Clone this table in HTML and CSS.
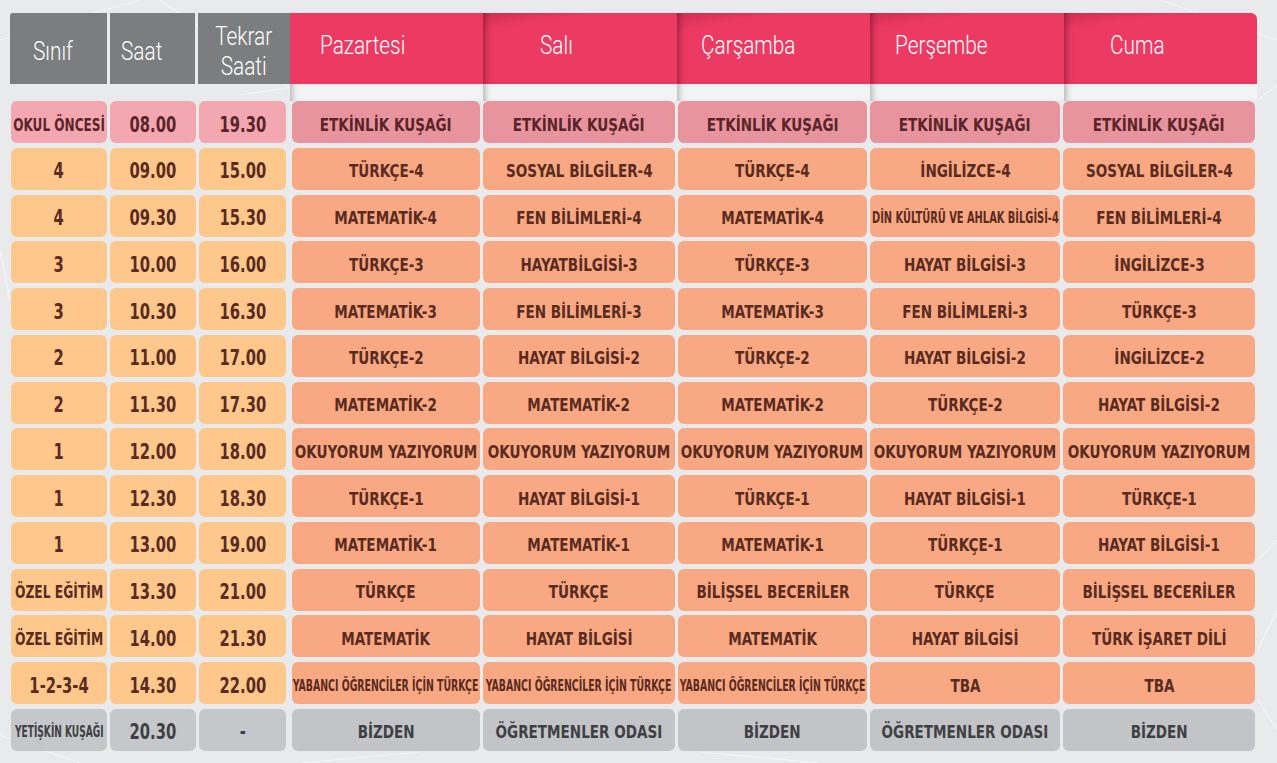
FILE: index.html
```html
<!DOCTYPE html>
<html lang="tr">
<head>
<meta charset="utf-8">
<title>Yayın Akışı</title>
<link rel="stylesheet" href="styles.css">
</head>
<body>
<div class="schedule">
  <div class="head">
    <div class="hgray">
      <div class="hcell hc-sinif"><span class="lbl">Sınıf</span></div>
      <div class="hcell hc-saat"><span class="lbl">Saat</span></div>
      <div class="hcell hc-tekrar"><span class="lbl lbl-c">Tekrar<br>Saati</span></div>
    </div>
    <div class="hdays">
      <div class="hday hd-pzt"><span class="lbl">Pazartesi</span></div>
      <div class="hday hd-sal"><span class="lbl">Salı</span></div>
      <div class="hday hd-car"><span class="lbl">Çarşamba</span></div>
      <div class="hday hd-per"><span class="lbl">Perşembe</span></div>
      <div class="hday hd-cum"><span class="lbl">Cuma</span></div>
    </div>
  </div>
  <div class="strip">
    <div class="strip-cell"></div><div class="strip-cell"></div><div class="strip-cell"></div><div class="strip-cell"></div><div class="strip-cell"></div>
  </div>
  <div class="rows">
    <div class="row pink">
      <div class="c l"><span class="sq-okul">OKUL ÖNCESİ</span></div>
      <div class="c l n"><span>08.00</span></div>
      <div class="c l n"><span>19.30</span></div>
      <div class="c"><span>ETKİNLİK KUŞAĞI</span></div>
      <div class="c"><span>ETKİNLİK KUŞAĞI</span></div>
      <div class="c"><span>ETKİNLİK KUŞAĞI</span></div>
      <div class="c"><span>ETKİNLİK KUŞAĞI</span></div>
      <div class="c"><span>ETKİNLİK KUŞAĞI</span></div>
    </div>
    <div class="row orange">
      <div class="c l n"><span>4</span></div>
      <div class="c l n"><span>09.00</span></div>
      <div class="c l n"><span>15.00</span></div>
      <div class="c"><span>TÜRKÇE-4</span></div>
      <div class="c"><span>SOSYAL BİLGİLER-4</span></div>
      <div class="c"><span>TÜRKÇE-4</span></div>
      <div class="c"><span>İNGİLİZCE-4</span></div>
      <div class="c"><span>SOSYAL BİLGİLER-4</span></div>
    </div>
    <div class="row orange">
      <div class="c l n"><span>4</span></div>
      <div class="c l n"><span>09.30</span></div>
      <div class="c l n"><span>15.30</span></div>
      <div class="c"><span>MATEMATİK-4</span></div>
      <div class="c"><span>FEN BİLİMLERİ-4</span></div>
      <div class="c"><span>MATEMATİK-4</span></div>
      <div class="c"><span class="sq-din">DİN KÜLTÜRÜ VE AHLAK BİLGİSİ-4</span></div>
      <div class="c"><span>FEN BİLİMLERİ-4</span></div>
    </div>
    <div class="row orange">
      <div class="c l n"><span>3</span></div>
      <div class="c l n"><span>10.00</span></div>
      <div class="c l n"><span>16.00</span></div>
      <div class="c"><span>TÜRKÇE-3</span></div>
      <div class="c"><span>HAYATBİLGİSİ-3</span></div>
      <div class="c"><span>TÜRKÇE-3</span></div>
      <div class="c"><span>HAYAT BİLGİSİ-3</span></div>
      <div class="c"><span>İNGİLİZCE-3</span></div>
    </div>
    <div class="row orange">
      <div class="c l n"><span>3</span></div>
      <div class="c l n"><span>10.30</span></div>
      <div class="c l n"><span>16.30</span></div>
      <div class="c"><span>MATEMATİK-3</span></div>
      <div class="c"><span>FEN BİLİMLERİ-3</span></div>
      <div class="c"><span>MATEMATİK-3</span></div>
      <div class="c"><span>FEN BİLİMLERİ-3</span></div>
      <div class="c"><span>TÜRKÇE-3</span></div>
    </div>
    <div class="row orange">
      <div class="c l n"><span>2</span></div>
      <div class="c l n"><span>11.00</span></div>
      <div class="c l n"><span>17.00</span></div>
      <div class="c"><span>TÜRKÇE-2</span></div>
      <div class="c"><span>HAYAT BİLGİSİ-2</span></div>
      <div class="c"><span>TÜRKÇE-2</span></div>
      <div class="c"><span>HAYAT BİLGİSİ-2</span></div>
      <div class="c"><span>İNGİLİZCE-2</span></div>
    </div>
    <div class="row orange">
      <div class="c l n"><span>2</span></div>
      <div class="c l n"><span>11.30</span></div>
      <div class="c l n"><span>17.30</span></div>
      <div class="c"><span>MATEMATİK-2</span></div>
      <div class="c"><span>MATEMATİK-2</span></div>
      <div class="c"><span>MATEMATİK-2</span></div>
      <div class="c"><span>TÜRKÇE-2</span></div>
      <div class="c"><span>HAYAT BİLGİSİ-2</span></div>
    </div>
    <div class="row orange">
      <div class="c l n"><span>1</span></div>
      <div class="c l n"><span>12.00</span></div>
      <div class="c l n"><span>18.00</span></div>
      <div class="c"><span>OKUYORUM YAZIYORUM</span></div>
      <div class="c"><span>OKUYORUM YAZIYORUM</span></div>
      <div class="c"><span>OKUYORUM YAZIYORUM</span></div>
      <div class="c"><span>OKUYORUM YAZIYORUM</span></div>
      <div class="c"><span>OKUYORUM YAZIYORUM</span></div>
    </div>
    <div class="row orange">
      <div class="c l n"><span>1</span></div>
      <div class="c l n"><span>12.30</span></div>
      <div class="c l n"><span>18.30</span></div>
      <div class="c"><span>TÜRKÇE-1</span></div>
      <div class="c"><span>HAYAT BİLGİSİ-1</span></div>
      <div class="c"><span>TÜRKÇE-1</span></div>
      <div class="c"><span>HAYAT BİLGİSİ-1</span></div>
      <div class="c"><span>TÜRKÇE-1</span></div>
    </div>
    <div class="row orange">
      <div class="c l n"><span>1</span></div>
      <div class="c l n"><span>13.00</span></div>
      <div class="c l n"><span>19.00</span></div>
      <div class="c"><span>MATEMATİK-1</span></div>
      <div class="c"><span>MATEMATİK-1</span></div>
      <div class="c"><span>MATEMATİK-1</span></div>
      <div class="c"><span>TÜRKÇE-1</span></div>
      <div class="c"><span>HAYAT BİLGİSİ-1</span></div>
    </div>
    <div class="row orange">
      <div class="c l"><span class="sq-ozel">ÖZEL EĞİTİM</span></div>
      <div class="c l n"><span>13.30</span></div>
      <div class="c l n"><span>21.00</span></div>
      <div class="c"><span>TÜRKÇE</span></div>
      <div class="c"><span>TÜRKÇE</span></div>
      <div class="c"><span>BİLİŞSEL BECERİLER</span></div>
      <div class="c"><span>TÜRKÇE</span></div>
      <div class="c"><span>BİLİŞSEL BECERİLER</span></div>
    </div>
    <div class="row orange">
      <div class="c l"><span class="sq-ozel">ÖZEL EĞİTİM</span></div>
      <div class="c l n"><span>14.00</span></div>
      <div class="c l n"><span>21.30</span></div>
      <div class="c"><span>MATEMATİK</span></div>
      <div class="c"><span>HAYAT BİLGİSİ</span></div>
      <div class="c"><span>MATEMATİK</span></div>
      <div class="c"><span>HAYAT BİLGİSİ</span></div>
      <div class="c"><span>TÜRK İŞARET DİLİ</span></div>
    </div>
    <div class="row orange">
      <div class="c l n"><span>1-2-3-4</span></div>
      <div class="c l n"><span>14.30</span></div>
      <div class="c l n"><span>22.00</span></div>
      <div class="c"><span class="sq-yab">YABANCI ÖĞRENCİLER İÇİN TÜRKÇE</span></div>
      <div class="c"><span class="sq-yab">YABANCI ÖĞRENCİLER İÇİN TÜRKÇE</span></div>
      <div class="c"><span class="sq-yab">YABANCI ÖĞRENCİLER İÇİN TÜRKÇE</span></div>
      <div class="c"><span>TBA</span></div>
      <div class="c"><span>TBA</span></div>
    </div>
    <div class="row gray">
      <div class="c l"><span class="sq-yet">YETİŞKİN KUŞAĞI</span></div>
      <div class="c l n"><span>20.30</span></div>
      <div class="c l n"><span>-</span></div>
      <div class="c"><span>BİZDEN</span></div>
      <div class="c"><span>ÖĞRETMENLER ODASI</span></div>
      <div class="c"><span>BİZDEN</span></div>
      <div class="c"><span>ÖĞRETMENLER ODASI</span></div>
      <div class="c"><span>BİZDEN</span></div>
    </div>
  </div>
</div>
</body>
</html>
```
FILE: styles.css
```css
* { box-sizing: border-box; margin: 0; padding: 0; }

html, body { width: 1277px; height: 763px; overflow: hidden; }

body {
  background-color: #e8eaeb;
  background-image: url("data:image/svg+xml,%3Csvg xmlns='http://www.w3.org/2000/svg' width='1277' height='763'%3E%3Cg stroke='%23ffffff' stroke-opacity='0.55' stroke-width='1.2' fill='none'%3E%3Cpath d='M0 40 L140 0'/%3E%3Cpath d='M160 0 L300 95'/%3E%3Cpath d='M240 95 L340 80 L420 100'/%3E%3Cpath d='M1160 0 L1277 40'/%3E%3Cpath d='M1258 100 L1277 85'/%3E%3Cpath d='M1258 560 L1277 540'/%3E%3Cpath d='M1258 650 L1277 610'/%3E%3Cpath d='M1258 700 L1277 730'/%3E%3Cpath d='M0 735 L80 763'/%3E%3Cpath d='M0 250 L10 300'/%3E%3Cpath d='M300 763 L420 752'/%3E%3Cpath d='M700 752 L820 763'/%3E%3C/g%3E%3C/svg%3E");
  font-family: "DejaVu Sans Condensed", "DejaVu Sans", sans-serif;
}

.schedule { padding: 13px 0 0 10px; width: 1277px; }

/* ---------- header ---------- */
.head { display: flex; height: 71px; width: 1247px; }

.hgray { display: flex; gap: 3px; flex: none; }

.hcell, .hday {
  color: #ffffff;
  font-family: Roboto, "Liberation Sans", sans-serif;
  font-weight: 300;
  font-size: 26px;
  line-height: 26px;
  display: flex;
  align-items: flex-start;
}

.hcell { background: #7b7d7f; padding-top: 25px; }
.hc-sinif { width: 97px; padding-left: 23px; border-top-left-radius: 3px; }
.hc-saat { width: 85px; padding-left: 11px; }
.hc-tekrar { width: 92px; justify-content: center; padding-top: 8px; line-height: 30px; text-align: center; }

.lbl { display: inline-block; transform: scaleX(0.8); transform-origin: left center; white-space: nowrap; }
.lbl-c { transform-origin: center center; }

.hdays { display: flex; width: 967px; flex: none; }

.hday {
  flex: none;
  width: 20%;
  background: #ec3a63;
  background-image: linear-gradient(170deg, rgba(120, 10, 40, 0.22) 0%, rgba(120, 10, 40, 0) 18%);
  padding-top: 19px;
  box-shadow: inset 7px 0 7px -5px rgba(60, 0, 15, 0.45);
}
.hd-pzt { padding-left: 30px; background-image: none; box-shadow: none; }
.hd-sal { padding-left: 57px; }
.hd-car { padding-left: 24px; }
.hd-per { padding-left: 25px; }
.hd-cum { padding-left: 46px; border-top-right-radius: 6px; }

/* strip under the day headers */
.strip { display: flex; height: 17px; width: 1247px; padding-left: 280px; }
.strip-cell {
  flex: none;
  width: 20%;
  background: #f2f3f4;
  box-shadow: inset 6px 0 6px -4px rgba(0, 0, 0, 0.28);
}

/* ---------- rows ---------- */
.rows { display: flex; flex-direction: column; gap: 4.77px; margin-left: 1px; width: 1247px; }

.row {
  display: grid;
  grid-template-columns: 96px 86px 87px 191px 192px 189px 190px 192px;
  column-gap: 3px;
  height: 42px;
}
.row > .c:nth-child(4) { margin-left: 3px; }

.c {
  border-radius: 6px;
  display: flex;
  align-items: center;
  justify-content: center;
  padding-top: 5px;
  color: #5a2b1f;
  font-weight: bold;
  font-size: 17.5px;
  line-height: 20px;
  white-space: nowrap;
}
.c span { display: inline-block; transform: scaleX(0.86); }

.c.n { font-size: 21px; }
.c.n span { transform: scaleX(0.78); }

.c .sq-okul { font-size: 17px; transform: scaleX(0.79); }
.c .sq-ozel { font-size: 18px; transform: scaleX(0.76); }
.c .sq-yet { font-size: 16px; transform: scaleX(0.63); }
.c .sq-din { font-size: 16px; transform: scaleX(0.685); }
.c .sq-yab { font-size: 15px; transform: scaleX(0.695); }

.row.pink .c { background: #e8949e; color: #5a2428; }
.row.pink .c.l { background: #f3a8b1; }

.row.orange .c { background: #f8a882; }
.row.orange .c.l { background: #fec88c; }

.row.gray .c { background: #c2c4c7; color: #3f4043; }
.row.gray .c.l { background: #c5c7ca; }
```
